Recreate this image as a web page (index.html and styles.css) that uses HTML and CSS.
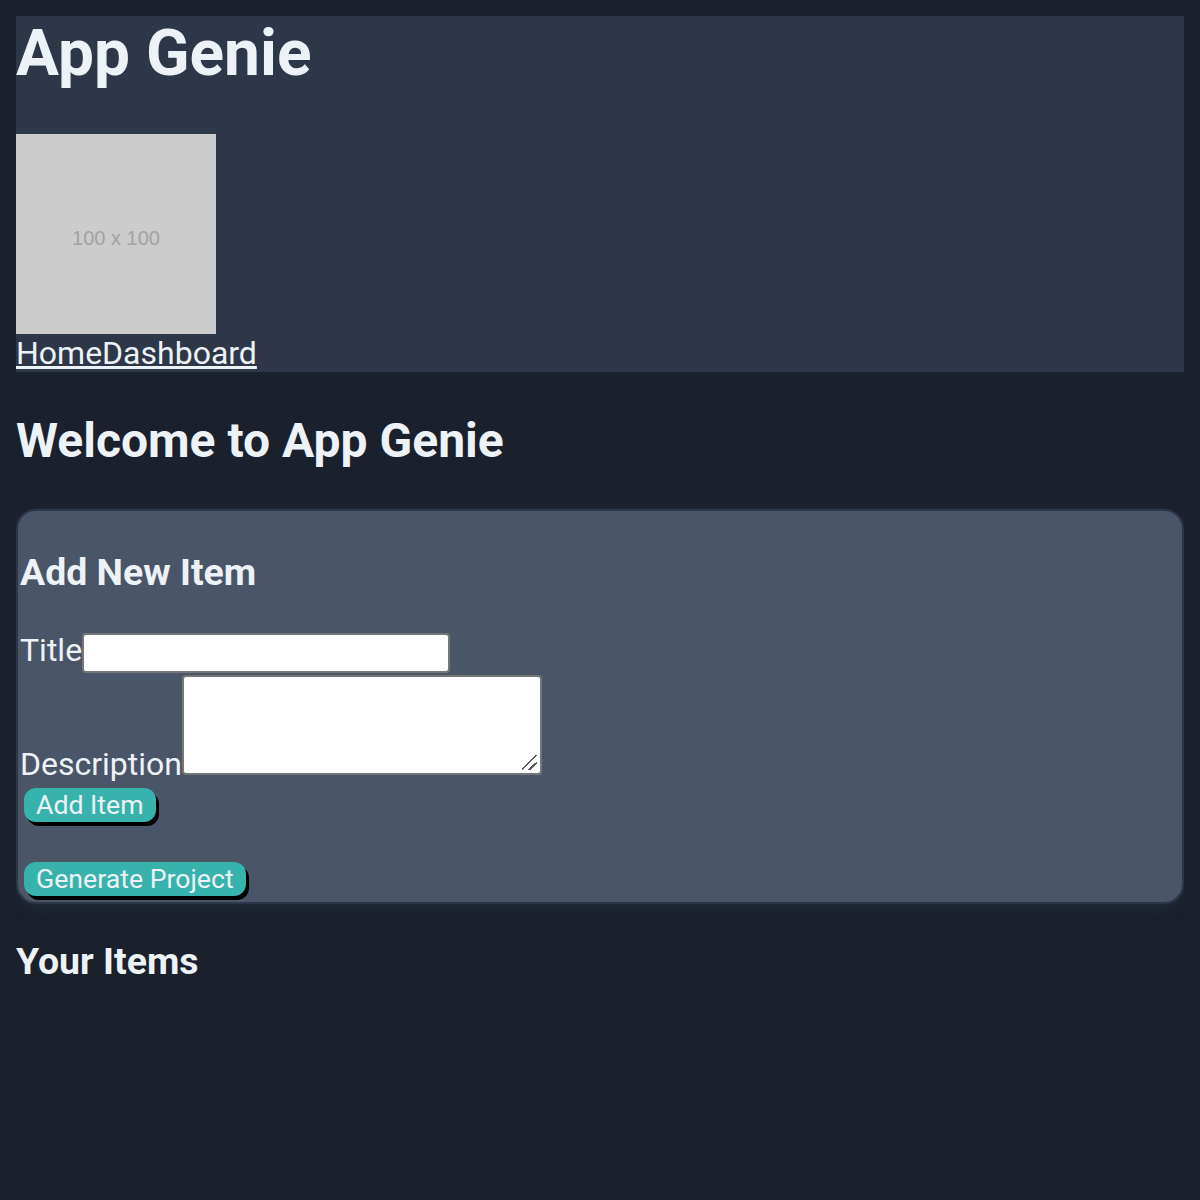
FILE: index.html
```html
<!DOCTYPE html>
<html lang="en">
<head>
<meta charset="utf-8">
<title>App Genie</title>
<link rel="stylesheet" href="styles.css">
</head>
<body>
<header class="site-header">
  <h1 class="site-title">App Genie</h1>
  <div class="logo-placeholder"><span>100 x 100</span></div>
  <nav class="site-nav"><a href="#">Home</a><a href="#">Dashboard</a></nav>
</header>
<main>
  <h2 class="welcome">Welcome to App Genie</h2>
  <section class="card">
    <h3 class="card-title">Add New Item</h3>
    <form class="item-form">
      <div class="row row-title">
        <label class="field-label" for="title">Title</label>
        <input class="text-input" id="title" type="text">
      </div>
      <div class="row row-desc">
        <label class="field-label" for="desc">Description</label>
        <textarea class="text-area" id="desc"></textarea>
      </div>
      <div class="row-btn">
        <button type="button" class="btn">Add Item</button>
      </div>
    </form>
    <div class="row-btn">
      <button type="button" class="btn">Generate Project</button>
    </div>
  </section>
  <h3 class="items-title">Your Items</h3>
</main>
</body>
</html>
```

FILE: styles.css
```css
html {
  background: #1a202c;
}
body {
  margin: 16px;
  background: #1a202c;
  color: #edf2f7;
  font-family: Roboto, "Liberation Sans", sans-serif;
  font-size: 32px;
}
.site-header {
  background: #2d3748;
}
.site-title {
  margin: 0 0 43px;
  font-size: 64px;
  font-weight: 700;
  line-height: normal;
}
.logo-placeholder {
  box-sizing: border-box;
  width: 200px;
  height: 200px;
  padding-top: 8px;
  background: #cccccc;
  display: flex;
  align-items: center;
  justify-content: center;
}
.logo-placeholder span {
  font-family: "Liberation Sans", Arial, sans-serif;
  font-size: 20px;
  color: #a3a3a3;
}
.site-nav {
  line-height: normal;
}
.site-nav a {
  color: #edf2f7;
  text-decoration: underline;
}
.welcome {
  margin: 40px 0;
  font-size: 48px;
  font-weight: 700;
  line-height: normal;
}
.card {
  background: #4a5568;
  border: 2px solid #2d3748;
  border-radius: 20px;
  padding: 2px;
  box-shadow: 0 4px 16px rgba(60, 70, 90, 0.25);
}
.card-title {
  margin: 37px 0 37.44px;
  font-size: 37.44px;
  font-weight: 700;
  line-height: normal;
}
.item-form {
  margin: 0 0 32px;
}
.row {
  display: flex;
  line-height: 37.5px;
}
.row-title {
  align-items: flex-start;
}
.row-title .field-label {
  margin-top: 1px;
}
.text-input {
  box-sizing: border-box;
  width: 368px;
  height: 40px;
  margin: 2px 0 0;
  padding: 2px 4px;
  border: 2px solid #767676;
  border-radius: 4px;
  background: #ffffff;
  font-size: 26px;
}
.row-desc {
  align-items: flex-end;
}
.text-area {
  box-sizing: border-box;
  width: 360px;
  height: 100px;
  margin: 2px 0 8px;
  padding: 4px;
  border: 2px solid #767676;
  border-radius: 4px;
  resize: none;
  background:
    linear-gradient(135deg, transparent 44%, #5a5a5a 44%, #5a5a5a 53%, transparent 53%, transparent 70%, #5a5a5a 70%, #5a5a5a 79%, transparent 79%) no-repeat right 3px bottom 3px / 15px 15px,
    #ffffff;
  font-size: 26px;
}
.row-btn {
  line-height: normal;
}
.btn {
  display: inline-block;
  margin: 4px;
  padding: 1px 12px;
  border: none;
  border-radius: 12px;
  background: #38b2ac;
  color: #edf2f7;
  font-family: Roboto, "Liberation Sans", sans-serif;
  font-size: 26.67px;
  line-height: 32px;
  box-shadow: 3px 4px 0 #000000;
  cursor: pointer;
}
.row-desc + .row-btn .btn {
  margin-top: 5px;
}
.items-title {
  margin: 35px 0 37.44px;
  font-size: 37.44px;
  font-weight: 700;
  line-height: normal;
}
```
